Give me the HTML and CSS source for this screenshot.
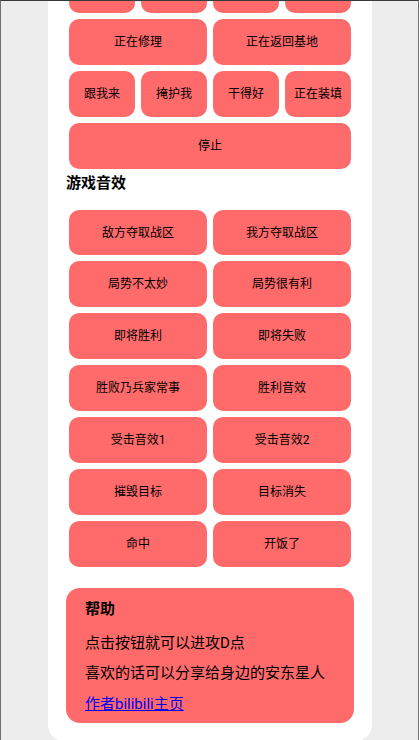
FILE: index.html
```html
<!DOCTYPE html>
<html lang="zh-CN">
<head>
<meta charset="utf-8">
<title>安东星语音</title>
<link rel="stylesheet" href="styles.css">
</head>
<body>
<div class="frame">
  <main class="card">
    <div class="grid four">
      <button class="btn" aria-label="收到"></button>
      <button class="btn" aria-label="谢谢"></button>
      <button class="btn" aria-label="抱歉"></button>
      <button class="btn" aria-label="好的"></button>
    </div>
    <div class="grid two">
      <button class="btn">正在修理</button>
      <button class="btn">正在返回基地</button>
    </div>
    <div class="grid four">
      <button class="btn">跟我来</button>
      <button class="btn">掩护我</button>
      <button class="btn">干得好</button>
      <button class="btn">正在装填</button>
    </div>
    <div class="grid one">
      <button class="btn">停止</button>
    </div>

    <h2 class="section-title">游戏音效</h2>
    <div class="grid two">
      <button class="btn">敌方夺取战区</button>
      <button class="btn">我方夺取战区</button>
      <button class="btn">局势不太妙</button>
      <button class="btn">局势很有利</button>
      <button class="btn">即将胜利</button>
      <button class="btn">即将失败</button>
      <button class="btn">胜败乃兵家常事</button>
      <button class="btn">胜利音效</button>
      <button class="btn">受击音效1</button>
      <button class="btn">受击音效2</button>
      <button class="btn">摧毁目标</button>
      <button class="btn">目标消失</button>
      <button class="btn">命中</button>
      <button class="btn">开饭了</button>
    </div>

    <section class="help">
      <h3 class="help-title">帮助</h3>
      <p class="help-text">点击按钮就可以进攻D点</p>
      <p class="help-text">喜欢的话可以分享给身边的安东星人</p>
      <a class="help-link" href="#">作者bilibili主页</a>
    </section>
  </main>
</div>
</body>
</html>
```

FILE: styles.css
```css
* {
  box-sizing: border-box;
}

html, body {
  margin: 0;
  padding: 0;
  background: #ededed;
}

body {
  font-family: Roboto, "Noto Sans CJK SC", "Noto Sans", sans-serif;
  color: #000;
}

.frame {
  height: 740px;
  overflow: hidden;
  border-top: 1px solid #3a3a3a;
  border-left: 1px solid #707070;
  border-right: 1px solid #707070;
  padding-left: 47px;
}

.card {
  width: 324px;
  margin-top: -55px;
  background: #fff;
  border-radius: 16px;
  padding: 18px;
}

.grid {
  display: grid;
}

.grid.one {
  grid-template-columns: 1fr;
}

.grid.two {
  grid-template-columns: repeat(2, 1fr);
}

.grid.four {
  grid-template-columns: repeat(4, 1fr);
}

.btn {
  margin: 3px;
  height: 45.9px;
  border: none;
  border-radius: 10px;
  background: #ff6b6b;
  color: #000;
  font-family: inherit;
  font-size: 12px;
  line-height: 16px;
  padding: 0;
}

.section-title {
  margin: 0 0 13px;
  font-size: 15px;
  line-height: 22px;
  font-weight: 700;
}

.help {
  margin-top: 18px;
  background: #ff6b6b;
  border-radius: 14px;
  padding: 10px 19px 8px;
  display: flex;
  flex-direction: column;
  align-items: flex-start;
}

.help-title {
  margin: 0 0 12px;
  font-size: 15px;
  line-height: 22px;
  font-weight: 700;
}

.help-text {
  margin: 0 0 8px;
  font-size: 15px;
  line-height: 22px;
}

.help-text + .help-link {
  margin-top: 1px;
}

.help-link {
  font-size: 15px;
  line-height: 22px;
  color: #0000ee;
  text-decoration: underline;
}
```
